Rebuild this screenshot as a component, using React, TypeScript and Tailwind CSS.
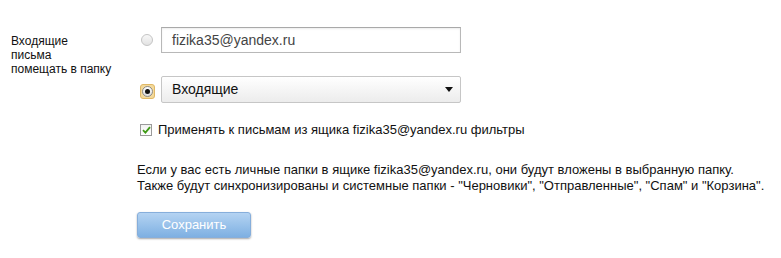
import React from "react";

function Radio({ checked }: { checked?: boolean }) {
  if (checked) {
    return (
      <div className="w-[15px] h-[15px] rounded-[3px] bg-[#f3d99b] border border-[#e0b866] flex items-center justify-center">
        <div className="w-[11px] h-[11px] rounded-full border border-[#8a8a8a] bg-gradient-to-b from-[#ffffff] to-[#dcdcdc] flex items-center justify-center">
          <div className="w-[5px] h-[5px] rounded-full bg-[#111]" />
        </div>
      </div>
    );
  }
  return (
    <div className="w-[12px] h-[12px] rounded-full border border-[#c4c4c4] bg-gradient-to-b from-[#f8f8f8] to-[#e2e2e2]" />
  );
}

function Checkbox() {
  return (
    <div className="w-[12px] h-[12px] border border-[#9a9a9a] bg-gradient-to-b from-[#f2f2f2] to-[#ffffff] flex items-center justify-center">
      <svg width="9" height="8" viewBox="0 0 9 8">
        <path d="M1 4.2 L3.4 6.6 L8 1.2" fill="none" stroke="#3f9b16" strokeWidth="1.8" />
      </svg>
    </div>
  );
}

export default function App() {
  return (
    <div className="w-[781px] h-[258px] bg-white font-['Liberation_Sans',Arial,sans-serif] text-[13px] text-black pt-[27px] pl-[11px]">
      <div className="flex">
        <div className="w-[126px] pt-[7px] text-[12px] leading-[14px] text-[#111]">
          <div>Входящие</div>
          <div>письма</div>
          <div>помещать в папку</div>
        </div>
        <div className="flex flex-col">
          <div className="flex items-center h-[26px]">
            <div className="w-[24px] pl-[4px] flex items-center">
              <Radio />
            </div>
            <div className="w-[300px] h-[26px] border border-[#b8b8b8] border-t-[#a9a9a9] bg-white shadow-[inset_0_1px_2px_rgba(0,0,0,0.08)] flex items-center pl-[10px] text-[14px] text-[#444]">
              fizika35@yandex.ru
            </div>
          </div>
          <div className="flex items-center h-[27px] mt-[23px]">
            <div className="w-[24px] pl-[3px] pt-[3px] flex items-center">
              <Radio checked />
            </div>
            <div className="w-[300px] h-[27px] border border-[#c6c6c6] rounded-[2px] bg-gradient-to-b from-[#ffffff] to-[#ececec] flex items-center justify-between pl-[10px] pr-[7px] text-[14px] text-[#111]">
              <span>Входящие</span>
              <svg width="8" height="5" viewBox="0 0 8 5">
                <path d="M0 0 L8 0 L4 5 Z" fill="#111" />
              </svg>
            </div>
          </div>
          <div className="flex items-center mt-[20px] pl-[3px] h-[14px]">
            <Checkbox />
            <span className="ml-[6px] text-[#111]">Применять к письмам из ящика fizika35@yandex.ru фильтры</span>
          </div>
          <div className="mt-[25px] leading-[16px] text-[#111]">
            <div>Если у вас есть личные папки в ящике fizika35@yandex.ru, они будут вложены в выбранную папку.</div>
            <div>Также будут синхронизированы и системные папки - "Черновики", "Отправленные", "Спам" и "Корзина".</div>
          </div>
          <div className="mt-[18px]">
            <button className="w-[114px] h-[26px] rounded-[3px] border border-[#86aedb] bg-gradient-to-b from-[#b4d3f2] to-[#7eb0e2] shadow-[0_1px_2px_rgba(0,0,0,0.35)] text-white text-[13px] font-['Liberation_Sans',Arial,sans-serif]">
              Сохранить
            </button>
          </div>
        </div>
      </div>
    </div>
  );
}
